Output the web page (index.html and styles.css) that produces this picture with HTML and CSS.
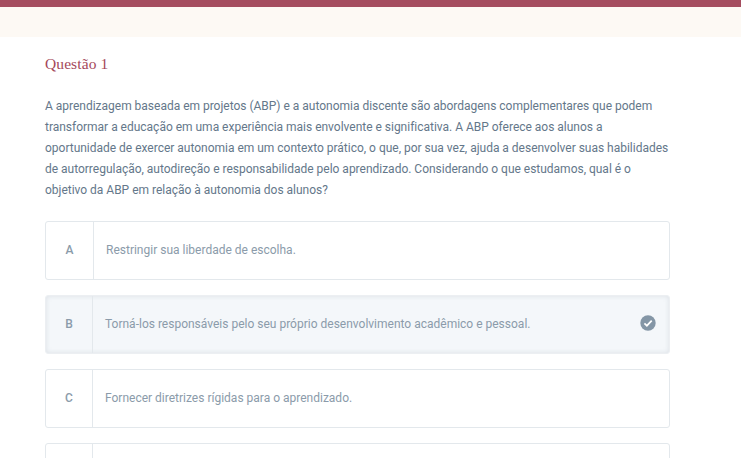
FILE: index.html
```html
<!DOCTYPE html>
<html lang="pt">
<head>
<meta charset="utf-8">
<title>Questão 1</title>
<link rel="stylesheet" href="styles.css">
</head>
<body>
<div class="topbar"></div>
<div class="band"></div>
<main class="content">
  <h1 class="title">Questão 1</h1>
  <p class="statement">A aprendizagem baseada em projetos (ABP) e a autonomia discente são abordagens complementares que podem<br>transformar a educação em uma experiência mais envolvente e significativa. A ABP oferece aos alunos a<br>oportunidade de exercer autonomia em um contexto prático, o que, por sua vez, ajuda a desenvolver suas habilidades<br>de autorregulação, autodireção e responsabilidade pelo aprendizado. Considerando o que estudamos, qual é o<br>objetivo da ABP em relação à autonomia dos alunos?</p>
  <div class="options">
    <div class="option wide">
      <div class="letter">A</div>
      <div class="text">Restringir sua liberdade de escolha.</div>
    </div>
    <div class="option selected">
      <div class="letter">B</div>
      <div class="text">Torná-los responsáveis pelo seu próprio desenvolvimento acadêmico e pessoal.</div>
      <svg class="check" viewBox="0 0 16 16" width="16" height="16" aria-hidden="true">
        <circle cx="8" cy="8" r="7.7" fill="#8496a6"/>
        <path d="M4.4 8.3l2.5 2.4 4.8-5" fill="none" stroke="#fff" stroke-width="1.7"/>
      </svg>
    </div>
    <div class="option">
      <div class="letter">C</div>
      <div class="text">Fornecer diretrizes rígidas para o aprendizado.</div>
    </div>
    <div class="option">
      <div class="letter"></div>
      <div class="text"></div>
    </div>
  </div>
</main>
</body>
</html>
```
FILE: styles.css
```css
html, body {
  margin: 0;
  height: 100%;
  overflow: hidden;
  background: #fff;
}
body {
  font-family: Roboto, "Liberation Sans", sans-serif;
}
.topbar {
  height: 7px;
  background: #a54d5f;
}
.band {
  height: 30px;
  background: #fdf9f4;
}
.content {
  padding: 18px 71px 0 45px;
}
.title {
  margin: 0 0 23px;
  font-family: "Liberation Serif", serif;
  font-size: 15.5px;
  line-height: 18px;
  font-weight: 400;
  letter-spacing: 0.1px;
  color: #a5485a;
}
.statement {
  margin: 0 0 20px;
  font-size: 12px;
  line-height: 21px;
  letter-spacing: -0.012px;
  color: #64778a;
  white-space: nowrap;
}
.options {
  display: flex;
  flex-direction: column;
  gap: 15px;
}
.option {
  display: flex;
  align-items: stretch;
  height: 59px;
  box-sizing: border-box;
  border: 1px solid #e3e8ec;
  border-radius: 3px;
  background: #fff;
  font-size: 12px;
  color: #8b9baa;
}
.letter {
  flex: 0 0 46px;
  display: flex;
  align-items: center;
  justify-content: center;
  border-right: 1px solid #e3e8ec;
  padding-bottom: 2px;
  box-sizing: content-box;
  font-weight: 500;
}
.wide .letter {
  flex-basis: 47px;
}
.text {
  flex: 1;
  display: flex;
  align-items: center;
  padding: 0 0 2px 12px;
}
.selected {
  background: #f4f7fa;
  border-color: #eceff2;
  box-shadow: inset 0 0 5px rgba(130, 145, 160, 0.22);
}
.check {
  align-self: center;
  margin: 0 13px 3px 0;
}
```
